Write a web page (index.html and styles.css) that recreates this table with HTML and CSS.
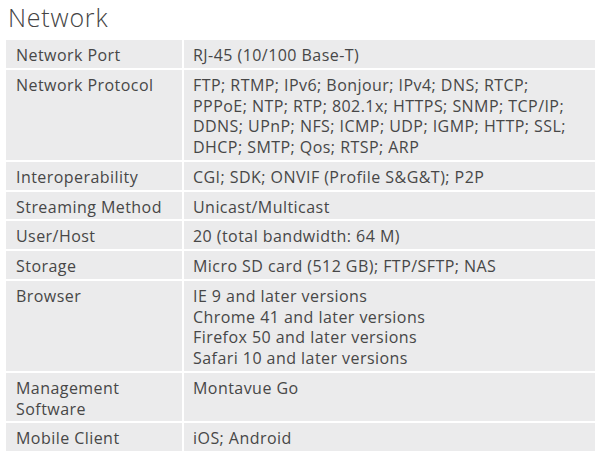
FILE: index.html
```html
<!DOCTYPE html>
<html lang="en">
<head>
<meta charset="utf-8">
<title>Network</title>
<link rel="stylesheet" href="styles.css">
</head>
<body>
<div class="page">
  <h2 class="title">Network</h2>
  <div class="spec">
    <div class="label">Network Port</div><div class="value">RJ-45 (10/100 Base-T)</div>
    <div class="label">Network Protocol</div><div class="value">FTP; RTMP; IPv6; Bonjour; IPv4; DNS; RTCP;<br>PPPoE; NTP; RTP; 802.1x; HTTPS; SNMP; TCP/IP;<br>DDNS; UPnP; NFS; ICMP; UDP; IGMP; HTTP; SSL;<br>DHCP; SMTP; Qos; RTSP; ARP</div>
    <div class="label">Interoperability</div><div class="value">CGI; SDK; ONVIF (Profile S&amp;G&amp;T); P2P</div>
    <div class="label">Streaming Method</div><div class="value">Unicast/Multicast</div>
    <div class="label">User/Host</div><div class="value">20 (total bandwidth: 64 M)</div>
    <div class="label">Storage</div><div class="value">Micro SD card (512 GB); FTP/SFTP; NAS</div>
    <div class="label">Browser</div><div class="value">IE 9 and later versions<br>Chrome 41 and later versions<br>Firefox 50 and later versions<br>Safari 10 and later versions</div>
    <div class="label">Management<br>Software</div><div class="value">Montavue Go</div>
    <div class="label">Mobile Client</div><div class="value">iOS; Android</div>
  </div>
</div>
</body>
</html>
```
FILE: styles.css
```css
html, body {
  margin: 0;
  padding: 0;
  background: #ffffff;
}
.page {
  padding: 0 9px 0 6px;
  font-family: "Open Sans", "DejaVu Sans", sans-serif;
  color: #474747;
}
.title {
  margin: 0 0 6px 2px;
  font-size: 25px;
  line-height: 34px;
  font-weight: 300;
  letter-spacing: 0.8px;
  color: #444444;
}
.spec {
  display: grid;
  grid-template-columns: 176px 1fr;
  gap: 2px 2px;
  font-size: 16px;
  line-height: 20.75px;
  letter-spacing: 0.45px;
}
.label, .value {
  background: #ebebec;
  padding: 5px 10px 2px 10px;
}
.value {
  padding-left: 9px;
}
```
